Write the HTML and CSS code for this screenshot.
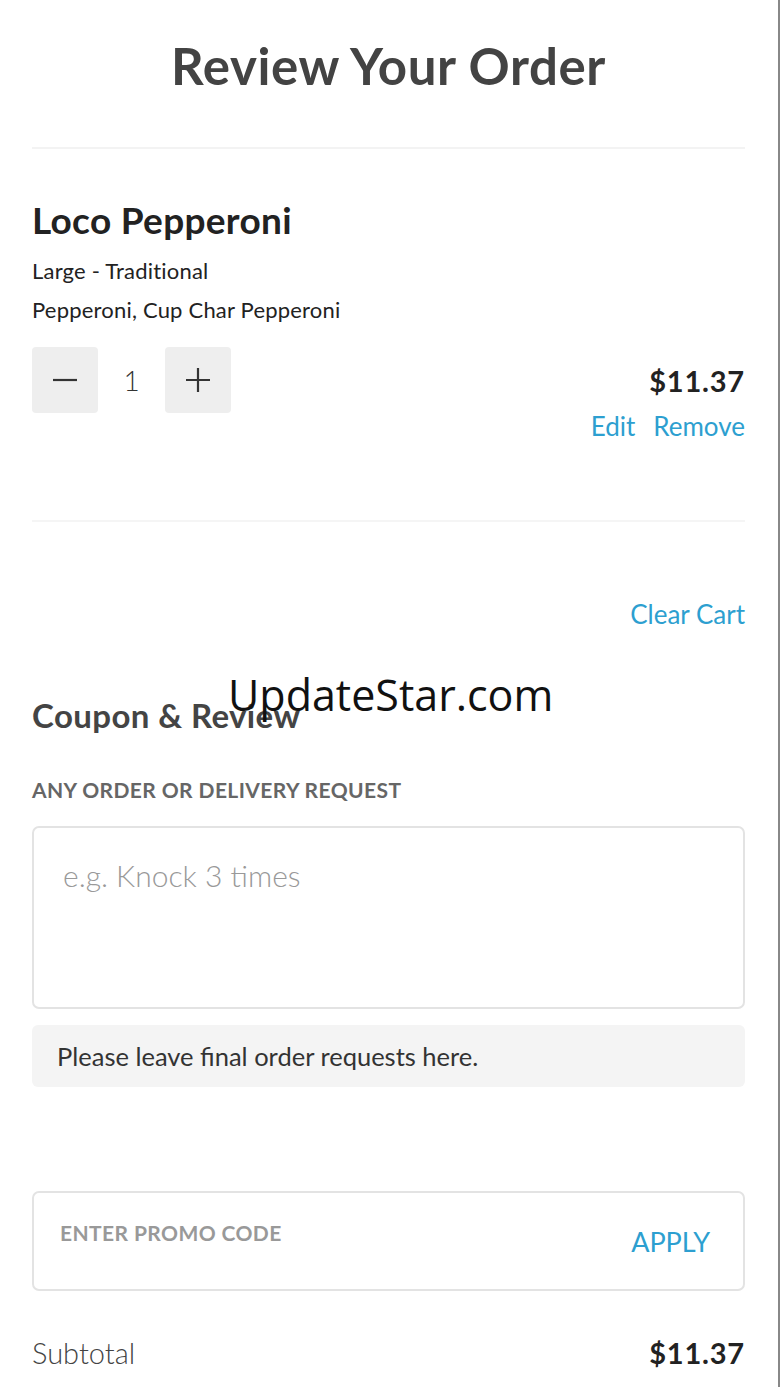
FILE: index.html
```html
<!DOCTYPE html>
<html>
<head>
<meta charset="utf-8">
<link rel="stylesheet" href="styles.css">
</head>
<body>
<div class="page">
  <header class="header">
    <h1 class="title">Review Your Order</h1>
  </header>
  <section class="item">
    <h2 class="item-name">Loco Pepperoni</h2>
    <p class="item-meta">Large - Traditional</p>
    <p class="item-meta">Pepperoni, Cup Char Pepperoni</p>
    <div class="item-row">
      <div class="qty">
        <button class="qty-btn" aria-label="decrease">
          <svg width="26" height="26" viewBox="0 0 26 26"><path d="M1 13H25" stroke="#333" stroke-width="2.2"/></svg>
        </button>
        <span class="qty-val">1</span>
        <button class="qty-btn" aria-label="increase">
          <svg width="26" height="26" viewBox="0 0 26 26"><path d="M1 13H25M13 1V25" stroke="#333" stroke-width="2.2"/></svg>
        </button>
      </div>
      <div class="price">$11.37</div>
    </div>
    <div class="item-actions">
      <a class="link">Edit</a>
      <a class="link">Remove</a>
    </div>
  </section>
  <div class="clear-row"><a class="link clear">Clear Cart</a></div>
  <section class="coupon">
    <h3 class="section-title">Coupon &amp; Review</h3>
    <div class="label">ANY ORDER OR DELIVERY REQUEST</div>
    <div class="textarea"><span class="placeholder">e.g. Knock 3 times</span></div>
    <div class="note">Please leave final order requests here.</div>
    <div class="promo">
      <span class="promo-label">ENTER PROMO CODE</span>
      <a class="link apply">APPLY</a>
    </div>
    <div class="subtotal">
      <span class="sub-label">Subtotal</span>
      <span class="sub-price">$11.37</span>
    </div>
  </section>
  <div class="watermark">UpdateStar.com</div>
</div>
</body>
</html>
```

FILE: styles.css
```css
* { box-sizing: border-box; }
html, body { margin: 0; padding: 0; background: #fff; }
body {
  font-family: "Lato", "Liberation Sans", sans-serif;
  color: #333;
}
.page {
  position: relative;
  width: 780px;
  min-height: 1387px;
  padding: 0 33px 0 32px;
  border-right: 2px solid #888;
  overflow: hidden;
}
.header {
  height: 149px;
  border-bottom: 2px solid #f3f3f3;
  display: flex;
  justify-content: center;
  padding-top: 36px;
}
.title {
  margin: 0;
  font-size: 51px;
  font-weight: 700;
  color: #434343;
  line-height: 60px;
  letter-spacing: 0.6px;
}
.item {
  padding-top: 46px;
  height: 373px;
  border-bottom: 2px solid #f5f5f5;
}
.item-name {
  margin: 0 0 6px;
  font-size: 37px;
  font-weight: 700;
  color: #222;
  line-height: 50px;
  letter-spacing: 0.3px;
}
.item-meta {
  margin: 0;
  font-size: 22px;
  line-height: 39px;
  color: #222;
  letter-spacing: 0.2px;
}
.item-row {
  margin-top: 18px;
  display: flex;
  justify-content: space-between;
  align-items: center;
}
.qty { display: flex; align-items: center; }
.qty-btn {
  width: 66px; height: 66px;
  border: none; border-radius: 4px;
  background: #eee;
  display: flex; align-items: center; justify-content: center;
  padding: 0;
}
.qty-val {
  width: 67px;
  text-align: center;
  font-size: 28px;
  font-weight: 300;
  color: #333;
}
.price {
  font-size: 29px;
  font-weight: 700;
  color: #222;
  letter-spacing: 0.8px;
}
.item-actions {
  margin-top: -2px;
  display: flex;
  justify-content: flex-end;
  gap: 18px;
}
.link {
  color: #2d9fd0;
  font-size: 26px;
  line-height: 30px;
}
.clear-row {
  display: flex;
  justify-content: flex-end;
  padding-top: 77px;
}
.clear { font-size: 26px; }
.coupon { padding-top: 68px; }
.section-title {
  margin: 0;
  font-size: 33px;
  font-weight: 700;
  color: #444;
  line-height: 36px;
  letter-spacing: 0.4px;
}
.label {
  margin-top: 45px;
  font-size: 21px;
  font-weight: 700;
  color: #666;
  line-height: 24px;
  letter-spacing: 0.4px;
}
.textarea {
  margin-top: 24px;
  height: 183px;
  border: 2px solid #e3e3e3;
  border-radius: 7px;
  padding: 29px 29px;
}
.placeholder {
  font-size: 30px;
  font-weight: 300;
  color: #999;
}
.note {
  margin-top: 16px;
  height: 62px;
  background: #f4f4f4;
  border-radius: 6px;
  padding: 0 25px;
  display: flex;
  align-items: center;
  font-size: 25.5px;
  color: #333;
}
.promo {
  margin-top: 104px;
  height: 100px;
  border: 2px solid #e3e3e3;
  border-radius: 7px;
  display: flex;
  justify-content: space-between;
  align-items: flex-start;
  padding: 27px 33px 0 26px;
}
.promo-label {
  font-size: 21px;
  font-weight: 700;
  color: #999;
  letter-spacing: 0.4px;
}
.apply {
  margin-top: 7px;
  font-size: 27px;
}
.subtotal {
  margin-top: 44px;
  display: flex;
  justify-content: space-between;
  align-items: center;
}
.sub-label { font-size: 29px; font-weight: 300; color: #444; }
.sub-price { font-size: 29px; font-weight: 700; color: #222; letter-spacing: 0.8px; }
.watermark {
  position: absolute;
  left: 228px;
  top: 665px;
  font-family: "Open Sans", sans-serif;
  font-size: 43px;
  color: #111;
  line-height: 60px;
}
```
